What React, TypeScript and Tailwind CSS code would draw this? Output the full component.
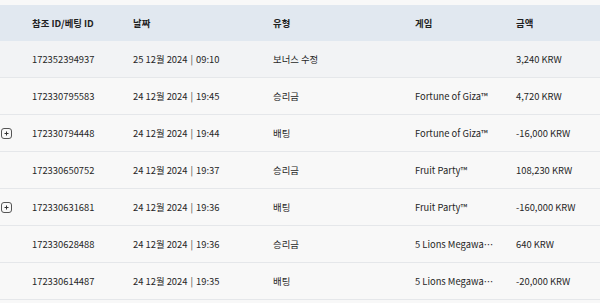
import React from 'react';

type Row = {
  id: string;
  date: string;
  time: string;
  type: string;
  game?: string;
  amount: string;
  expandable?: boolean;
  highlight?: boolean;
};

const rows: Row[] = [
  { id: '172352394937', date: '25 12월 2024', time: '09:10', type: '보너스 수정', amount: '3,240 KRW', highlight: true },
  { id: '172330795583', date: '24 12월 2024', time: '19:45', type: '승리금', game: 'Fortune of Giza™', amount: '4,720 KRW' },
  { id: '172330794448', date: '24 12월 2024', time: '19:44', type: '배팅', game: 'Fortune of Giza™', amount: '-16,000 KRW', expandable: true },
  { id: '172330650752', date: '24 12월 2024', time: '19:37', type: '승리금', game: 'Fruit Party™', amount: '108,230 KRW' },
  { id: '172330631681', date: '24 12월 2024', time: '19:36', type: '배팅', game: 'Fruit Party™', amount: '-160,000 KRW', expandable: true },
  { id: '172330628488', date: '24 12월 2024', time: '19:36', type: '승리금', game: '5 Lions Megaways™', amount: '640 KRW' },
  { id: '172330614487', date: '24 12월 2024', time: '19:35', type: '배팅', game: '5 Lions Megaways™', amount: '-20,000 KRW' },
];

const cols = 'grid grid-cols-[32px_101px_140px_142px_101px_1fr] items-center';

function PlusBox() {
  return (
    <svg width="11" height="11" viewBox="0 0 11 11" className="ml-[1px]">
      <rect x="0.5" y="0.5" width="10" height="10" rx="2.5" fill="none" stroke="#555" strokeWidth="1" />
      <path d="M5.5 3.5v4M3.5 5.5h4" stroke="#333" strokeWidth="1" />
    </svg>
  );
}

export default function App() {
  return (
    <div
      className="w-[600px] h-[303px] overflow-hidden bg-[#f8f8f8] pt-[5px] text-[#262626] text-[9.4px]"
      style={{ fontFamily: '"Noto Sans CJK KR", "Noto Sans", sans-serif' }}
    >
      <div className={`${cols} h-[36px] bg-[#e1e8f0] font-bold text-[#1f1f1f]`}>
        <div />
        <div>참조 ID/베팅 ID</div>
        <div>날짜</div>
        <div>유형</div>
        <div>게임</div>
        <div>금액</div>
      </div>
      {rows.map((r) => (
        <div
          key={r.id}
          className={`${cols} h-[37px] border-b border-[#e5e7ea] ${r.highlight ? 'bg-[#f2f3f5]' : 'bg-[#f8f8f8]'}`}
        >
          <div className="flex items-center">{r.expandable && <PlusBox />}</div>
          <div>{r.id}</div>
          <div>
            {r.date}<span className="mx-[3px] text-[#444]">|</span>{r.time}
          </div>
          <div>{r.type}</div>
          <div className="w-[82px] truncate">{r.game}</div>
          <div>{r.amount}</div>
        </div>
      ))}
    </div>
  );
}
